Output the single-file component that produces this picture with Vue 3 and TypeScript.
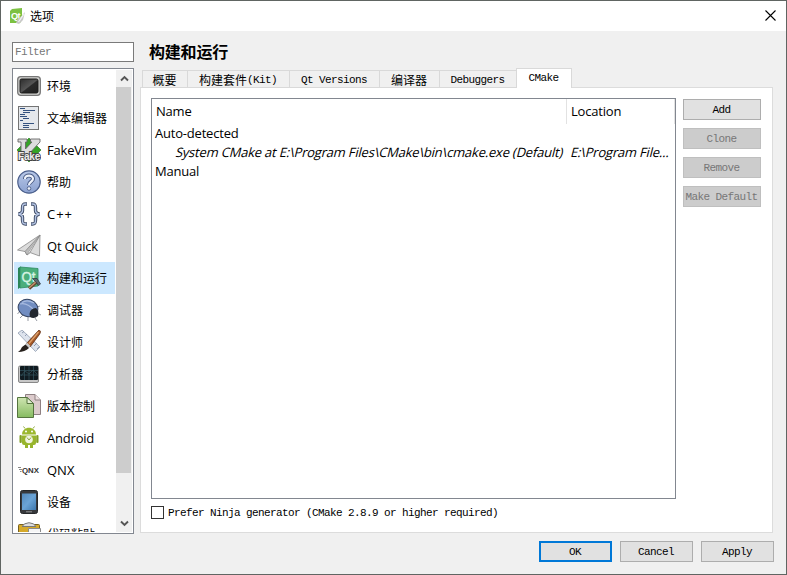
<script setup lang="ts">
import { ref } from 'vue'

interface Category { id: string; label: string; cjk?: boolean }
interface Tab { cjk?: string; latin?: string; width: number; active?: boolean }
interface Action { label: string; enabled: boolean }

const categories: Category[] = [
  { id: 'env', label: '环境', cjk: true },
  { id: 'editor', label: '文本编辑器', cjk: true },
  { id: 'vim', label: 'FakeVim' },
  { id: 'help', label: '帮助', cjk: true },
  { id: 'cpp', label: 'C++' },
  { id: 'quick', label: 'Qt Quick' },
  { id: 'build', label: '构建和运行', cjk: true },
  { id: 'debug', label: '调试器', cjk: true },
  { id: 'design', label: '设计师', cjk: true },
  { id: 'analyze', label: '分析器', cjk: true },
  { id: 'vcs', label: '版本控制', cjk: true },
  { id: 'android', label: 'Android' },
  { id: 'qnx', label: 'QNX' },
  { id: 'device', label: '设备', cjk: true },
  { id: 'paste', label: '代码粘贴', cjk: true },
]
const selected = ref('build')

const tabs: Tab[] = [
  { cjk: '概要', width: 45 },
  { cjk: '构建套件', latin: '(Kit)', width: 102 },
  { latin: 'Qt Versions', width: 90 },
  { cjk: '编译器', width: 60 },
  { latin: 'Debuggers', width: 77 },
  { latin: 'CMake', width: 56, active: true },
]
const actions: Action[] = [
  { label: 'Add', enabled: true },
  { label: 'Clone', enabled: false },
  { label: 'Remove', enabled: false },
  { label: 'Make Default', enabled: false },
]
const ninja = ref(false)
</script>

<template>
  <div class="window">
    <header class="titlebar">
      <svg class="app-icon" width="16" height="16" viewBox="0 0 16 16">
        <path d="M3 1L13 0V12L11 15H1V3Z" fill="#7cc142" />
        <text x="2" y="11" class="qt-small" textLength="9" lengthAdjust="spacingAndGlyphs">Qt</text>
        <path d="M16 4L14 12L10 16L7 15L8.5 11L12 8.5Z" fill="#c8c8c8" />
        <path d="M15 6L9.5 14" stroke="#f4f4f4" stroke-width="1.2" />
      </svg>
      <span class="title">选项</span>
      <svg class="close" width="11" height="11" viewBox="0 0 11 11"><path d="M.5 .5L10.5 10.5M10.5 .5L.5 10.5" stroke="#000" stroke-width="1.1" /></svg>
    </header>

    <div class="body">
      <aside class="side">
        <div class="filter">Filter</div>
        <div class="list">
          <div class="items">
            <div v-for="c in categories" :key="c.id" class="item" :class="[c.id, { selected: c.id === selected, latin: !c.cjk }]" @click="selected = c.id">
              <svg class="icon" width="24" height="24" viewBox="0 0 24 24">
                <defs>
                  <linearGradient id="dark" x1="0" y1="0" x2="1" y2="1"><stop offset="0" stop-color="#2c2c2c" /><stop offset=".5" stop-color="#555" /><stop offset=".55" stop-color="#2a2a2a" /><stop offset="1" stop-color="#222" /></linearGradient>
                  <linearGradient id="blue" x1="0" y1="0" x2="0" y2="1"><stop offset="0" stop-color="#b8c8e8" /><stop offset="1" stop-color="#8ba1d0" /></linearGradient>
                  <linearGradient id="screen" x1="0" y1="0" x2="1" y2="1"><stop offset="0" stop-color="#5389bb" /><stop offset=".5" stop-color="#6ba4d6" /><stop offset="1" stop-color="#3d77ad" /></linearGradient>
                  <linearGradient id="leaf" x1="0" y1="0" x2="0" y2="1"><stop offset="0" stop-color="#cfe5b2" /><stop offset="1" stop-color="#86bb60" /></linearGradient>
                </defs>
                <g v-if="c.id === 'env'">
                  <rect x=".7" y="2.7" width="22.6" height="18.6" rx="3" fill="#d2d2cf" stroke="#777" stroke-width="1.3" />
                  <rect x="3" y="5" width="18" height="14" rx="1.5" fill="url(#dark)" stroke="#1b1b1b" />
                </g>
                <g v-else-if="c.id === 'editor'">
                  <rect x="1.5" y=".5" width="20" height="23" fill="#e5e8ec" stroke="#747474" />
                  <path d="M3 2.5H8M6 4.5H18M6 6.5H13M3 8.5H8M3 10.5H10M6 12.5H12M3 14.5H6M6 17.5H17M6 19.5H12M6 21.5H12" stroke="#34527f" stroke-width="1.1" />
                </g>
                <g v-else-if="c.id === 'vim'">
                  <path d="M12 0L24 12L12 24L0 12Z" fill="#35a426" stroke="#1e7415" stroke-width=".6" />
                  <path d="M1 1H10V4H8.5V11L15 4H13.5V1H23V4L10 18H4V4H1Z" fill="#ddd" stroke="#666" stroke-width=".9" />
                  <text x="1" y="21.5" class="fake" textLength="22" lengthAdjust="spacingAndGlyphs">Fake</text>
                </g>
                <g v-else-if="c.id === 'help'">
                  <circle cx="12" cy="12" r="11.2" fill="url(#blue)" stroke="#4b5f8b" stroke-width="1.2" />
                  <path d="M8 9C8 4.5 16 4.5 16 8.8C16 12 12 11.5 12 15" fill="none" stroke="#40527c" stroke-width="4" />
                  <path d="M8 9C8 4.5 16 4.5 16 8.8C16 12 12 11.5 12 15" fill="none" stroke="#edf2fb" stroke-width="2.2" />
                  <circle cx="12" cy="18.5" r="1.8" fill="#edf2fb" stroke="#40527c" stroke-width=".8" />
                </g>
                <g v-else-if="c.id === 'cpp'" fill="none">
                  <path d="M10 2H8.5C5.5 2 5.5 3.5 5.5 6V8.5C5.5 10.5 4.5 11.5 1.5 12C4.5 12.5 5.5 13.5 5.5 15.5V18C5.5 20.5 5.5 22 8.5 22H10M14 2H15.5C18.5 2 18.5 3.5 18.5 6V8.5C18.5 10.5 19.5 11.5 22.5 12C19.5 12.5 18.5 13.5 18.5 15.5V18C18.5 20.5 18.5 22 15.5 22H14" stroke="#434f69" stroke-width="3.4" />
                  <path d="M9.5 2H8.5C5.5 2 5.5 3.5 5.5 6V8.5C5.5 10.5 4.5 11.5 1.5 12C4.5 12.5 5.5 13.5 5.5 15.5V18C5.5 20.5 5.5 22 8.5 22H9.5M14.5 2H15.5C18.5 2 18.5 3.5 18.5 6V8.5C18.5 10.5 19.5 11.5 22.5 12C19.5 12.5 18.5 13.5 18.5 15.5V18C18.5 20.5 18.5 22 15.5 22H14.5" stroke="#b4c4e4" stroke-width="1.4" />
                </g>
                <g v-else-if="c.id === 'quick'" stroke="#888" stroke-width=".8" stroke-linejoin="round">
                  <path d="M23 1L.5 16L8 17.5L10 21L13 18.5L22.5 22Z" fill="#dcdcdc" />
                  <path d="M23 1L8 17.5L10 21Z" fill="#bbb" /><path d="M23 1L13 18.5L10 21" fill="#eee" />
                </g>
                <g v-else-if="c.id === 'build'">
                  <path d="M1 2L4 .5V21L1 23Z" fill="#288457" /><path d="M3 1L21 2.5V20L3 22Z" fill="#4bae7c" stroke="#2d8b60" stroke-width=".8" />
                  <text x="4.5" y="16" class="qt-mark" textLength="14" lengthAdjust="spacingAndGlyphs">Qt</text>
                  <path d="M12 22.5L20 15.5" stroke="#66452e" stroke-width="3.2" /><path d="M12 22L20 15" stroke="#c49470" stroke-width="1.4" />
                  <path d="M15.5 12.5L20 12.5L23.5 18L21.5 19.5L18.5 15.5Z" fill="#5c6a70" stroke="#263239" stroke-width=".7" />
                </g>
                <g v-else-if="c.id === 'debug'">
                  <path d="M3 13L.5 16M6 17L3 20M11 19V23M20 9L23 8M22 16L24 17M18 20L20 23" stroke="#8a8f99" stroke-width=".9" />
                  <ellipse cx="11" cy="10" rx="10" ry="8.6" transform="rotate(20 11 10)" fill="#718dc1" stroke="#334260" />
                  <path d="M3 6Q10 4 18 13M5 4.5Q10 1 17 5" stroke="#a9bce0" stroke-width="1.2" fill="none" />
                  <path d="M12.5 16Q13 10.5 19 10Q22.5 13 21 18Q17 21.5 13 19Z" fill="#22272f" />
                </g>
                <g v-else-if="c.id === 'design'">
                  <path d="M1 3L5 0L23 17L18.5 21.5Z" fill="#dde3ed" stroke="#929eb1" stroke-width=".8" />
                  <path d="M5 3L7 1.5M8 6L10 4M14 13L17 10M17 16L20 13M20 19L22 17" stroke="#7f8da4" stroke-width=".8" />
                  <path d="M22 0C24 1 24 2 22 5L13 17L9 14Z" fill="#a75927" stroke="#5e2e14" stroke-width=".8" />
                  <path d="M21.5 2L12 13.5" stroke="#dda16c" stroke-width="1.3" />
                  <path d="M10 12.5L13.5 16L11.5 18L8 15Z" fill="#c7c7c7" />
                  <path d="M8.5 14.5L12 18Q8 22 1 22Q4 20 5 17Z" fill="#27201c" />
                </g>
                <g v-else-if="c.id === 'analyze'">
                  <rect x="1.5" y="4" width="20" height="16.5" rx="1.5" fill="#c7c7c7" stroke="#888" />
                  <rect x="3" y="4" width="18" height="14" rx="1" fill="#111b20" />
                  <path d="M7.5 4V18M12 4V18M16.5 4V18M3 8.5H21M3 13H21" stroke="#32535e" stroke-width=".7" />
                  <path d="M4 14L8 9L12 12L16 8L20 12" stroke="#34555e" fill="none" stroke-width=".7" />
                </g>
                <g v-else-if="c.id === 'vcs'">
                  <path d="M8.5 .5H18L23.5 6V20.5H8.5Z" fill="#dccbcc" stroke="#8e8082" /><path d="M18 .5V6H23.5" fill="#eee2e2" stroke="#8e8082" />
                  <path d="M.5 3.5H10L16.5 9.5V23.5H.5Z" fill="url(#leaf)" stroke="#55743f" /><path d="M10 3.5V9.5H16.5Z" fill="#e0efcf" stroke="#55743f" />
                </g>
                <g v-else-if="c.id === 'android'">
                  <path d="M8 2.5L6.5 .5M16 2.5L17.5 .5" stroke="#8eaa3b" />
                  <path d="M5 8.5C5 -.5 19 -.5 19 8.5Z" fill="#9cb82f" /><circle cx="9" cy="5.5" r="1" fill="#fff" /><circle cx="15" cy="5.5" r="1" fill="#fff" />
                  <path d="M5 9.5H19V17Q19 19 17 19H7Q5 19 5 17ZM8 18H11V22H8ZM13 18H16V22H13Z" fill="#98b52c" />
                  <rect x="2.5" y="9" width="2.3" height="8" rx="1.1" fill="#829f24" /><rect x="19.2" y="9" width="2.3" height="8" rx="1.1" fill="#829f24" />
                  <circle cx="12" cy="13.5" r="3.8" fill="#f1f4e2" /><path d="M10 11.5L12 14L14 11.5" fill="none" stroke="#8da642" />
                </g>
                <g v-else-if="c.id === 'qnx'">
                  <path d="M1 9.5H4M2 11.5H5M3 13.5H4.5" stroke="#888" stroke-width="1" />
                  <text x="5" y="14.5" class="qnx-mark" textLength="17" lengthAdjust="spacingAndGlyphs">QNX</text>
                </g>
                <g v-else-if="c.id === 'device'">
                  <rect x="3.5" y=".5" width="17" height="23" rx="2" fill="#37393c" stroke="#242628" />
                  <rect x="5" y="3.5" width="14" height="16.5" fill="url(#screen)" />
                  <path d="M9 21.8H15" stroke="#aaa" stroke-width=".8" />
                </g>
                <g v-else>
                  <rect x="1.5" y="2.5" width="21" height="21" rx="1" fill="#d5a92a" stroke="#776020" />
                  <path d="M5 4.5Q7 1 12 .7Q17 1 19 4.5Z" fill="#ddd" stroke="#777" />
                  <path d="M11.5 6.5H23.5V24H11.5Z" fill="#f5f5f5" stroke="#8b8b8b" />
                </g>
              </svg>
              <span>{{ c.label }}</span>
            </div>
          </div>
          <div class="scroll">
            <div class="arrow"><svg width="9" height="7" viewBox="0 0 9 7"><path d="M1 5.5L4.5 2L8 5.5" fill="none" stroke="#555" stroke-width="1.9" /></svg></div>
            <div class="thumb"></div>
            <div class="arrow bottom"><svg width="9" height="7" viewBox="0 0 9 7"><path d="M1 1.5L4.5 5L8 1.5" fill="none" stroke="#555" stroke-width="1.9" /></svg></div>
          </div>
        </div>
      </aside>

      <main class="main">
        <h1>构建和运行</h1>
        <nav class="tabs">
          <div v-for="t in tabs" :key="t.width" class="tab" :class="{ active: t.active }" :style="{ width: t.width + 'px' }"><span v-if="t.cjk" class="han">{{ t.cjk }}</span><span v-if="t.latin">{{ t.latin }}</span></div>
        </nav>
        <section class="pane">
          <div class="content">
            <div class="tree">
              <div class="head"><span class="col name">Name</span><span class="col loc">Location</span></div>
              <div class="row">Auto-detected</div>
              <div class="row entry"><span class="path">System CMake at E:\Program Files\CMake\bin\cmake.exe (Default)</span><span class="place">E:\Program File...</span></div>
              <div class="row">Manual</div>
            </div>
            <div class="actions">
              <button v-for="a in actions" :key="a.label" :disabled="!a.enabled">{{ a.label }}</button>
            </div>
          </div>
          <div class="check" @click="ninja = !ninja"><span class="box" :class="{ on: ninja }"></span><span>Prefer Ninja generator (CMake 2.8.9 or higher required)</span></div>
        </section>
      </main>
    </div>

    <footer class="footer">
      <button class="primary">OK</button><button>Cancel</button><button>Apply</button>
    </footer>
  </div>
</template>

<style>
body { margin: 0; overflow: hidden; }
</style>

<style scoped>
* { box-sizing: border-box; }
.window { width: 787px; height: 575px; display: flex; flex-direction: column; background: #f0f0f0; border: 1px solid #606562; color: #000; font: 11px/14px "Liberation Mono", "Noto Sans CJK SC", monospace; letter-spacing: -.6px; }
.titlebar { height: 30px; flex: none; display: flex; align-items: center; background: #fff; padding: 0 10px 0 8px; }
.title { margin-left: 5px; padding-bottom: 1px; font: 12px/16px "Noto Sans CJK SC", sans-serif; letter-spacing: 0; }
.close { margin-left: auto; margin-top: -1px; }
.qt-small { font: bold 9px "Liberation Sans", sans-serif; fill: #fff; }
.qt-mark { font: 15px "Liberation Sans", sans-serif; fill: #d6f3e3; stroke: #d6f3e3; stroke-width: .4px; }
.fake { font: bold 10px "Liberation Sans", sans-serif; fill: #eee; stroke: #444; stroke-width: 1.8px; paint-order: stroke; }
.body { flex: none; display: flex; height: 503px; padding: 11px 13px 0 11px; gap: 6px; }
.side { width: 122px; flex: none; }
.filter { height: 20px; border: 1px solid #7a7a7a; background: #fff; color: #777; padding: 2px 2px; }
.list { margin-top: 6px; height: 466px; border: 1px solid #828790; background: #fff; display: flex; padding: 1px; overflow: hidden; }
.items { width: 101px; height: 462px; overflow: hidden; margin-right: 1px; }
.item { height: 32px; display: flex; align-items: center; padding-left: 3px; font: 12px/18px "Noto Sans CJK SC", sans-serif; letter-spacing: 0; white-space: nowrap; }
.item.latin { font: 13px/18px "Open Sans", sans-serif; letter-spacing: -.2px; }
.item.cpp { letter-spacing: 1px; }
.item.qnx { letter-spacing: 0; }
.item.selected { background: #cce8ff; }
.icon { flex: none; margin-right: 6px; }
.qnx-mark { font: bold 7px "Liberation Sans", sans-serif; fill: #333; }
.scroll { width: 16px; background: #f0f0f0; display: flex; flex-direction: column; }
.arrow { height: 17px; flex: none; display: flex; align-items: center; justify-content: center; }
.arrow.bottom { margin-top: auto; }
.thumb { height: 386px; width: 15px; background: #cdcdcd; }
.main { width: 633px; flex: none; display: flex; flex-direction: column; }
h1 { margin: 0; height: 26px; padding: 0 0 0 9px; font: bold 16px/19px "Noto Sans CJK SC", sans-serif; letter-spacing: -.2px; }
.tabs { height: 20px; display: flex; align-items: flex-end; padding-left: 2px; margin-bottom: -1px; z-index: 1; }
.tab { height: 18px; flex: none; display: flex; justify-content: center; border: 1px solid #d9d9d9; border-right: 0; line-height: 18px; white-space: nowrap; padding-right: 1px; }
.tab.active { height: 20px; background: #fff; border-right: 1px solid #d9d9d9; border-bottom: 0; }
.han { font: 12px/18px "Noto Sans CJK SC", sans-serif; letter-spacing: 0; }
.pane { height: 446px; border: 1px solid #dcdcdc; background: #fff; padding: 10px 11px 0 10px; }
.content { display: flex; gap: 7px; height: 401px; }
.tree { width: 525px; height: 401px; border: 1px solid #828790; font: 13px/18px "Open Sans", sans-serif; letter-spacing: -.2px; overflow: hidden; }
.head { display: flex; height: 25px; line-height: 25px; }
.col { border-right: 1px solid #e2e2e2; padding-left: 4px; }
.name { width: 415px; }
.loc { width: 108px; }
.row { height: 19px; line-height: 19px; padding-left: 3px; white-space: nowrap; }
.entry { display: flex; padding-left: 24px; }
.path { width: 395px; flex: none; transform: skewX(-14deg); }
.place { transform: skewX(-14deg); }
.actions { width: 78px; display: flex; flex-direction: column; gap: 8px; padding-top: 1px; }
button { height: 21px; border: 1px solid #adadad; background: #e1e1e1; color: #000; padding: 1px 1px 0 0; font: inherit; letter-spacing: -.6px; text-align: center; border-radius: 0; white-space: nowrap; }
button:disabled { background: #ccc; border-color: #bfbfbf; color: #777; }
.check { display: flex; align-items: center; height: 13px; margin-top: 7px; gap: 4px; white-space: nowrap; }
.box { width: 13px; height: 13px; border: 1px solid #333; background: #fff; }
.box.on { background: #333; }
.footer { display: flex; justify-content: flex-end; gap: 8px; padding: 7px 12px 0 0; }
.footer button { width: 73px; }
.footer .primary { border: 2px solid #0078d7; }
</style>
